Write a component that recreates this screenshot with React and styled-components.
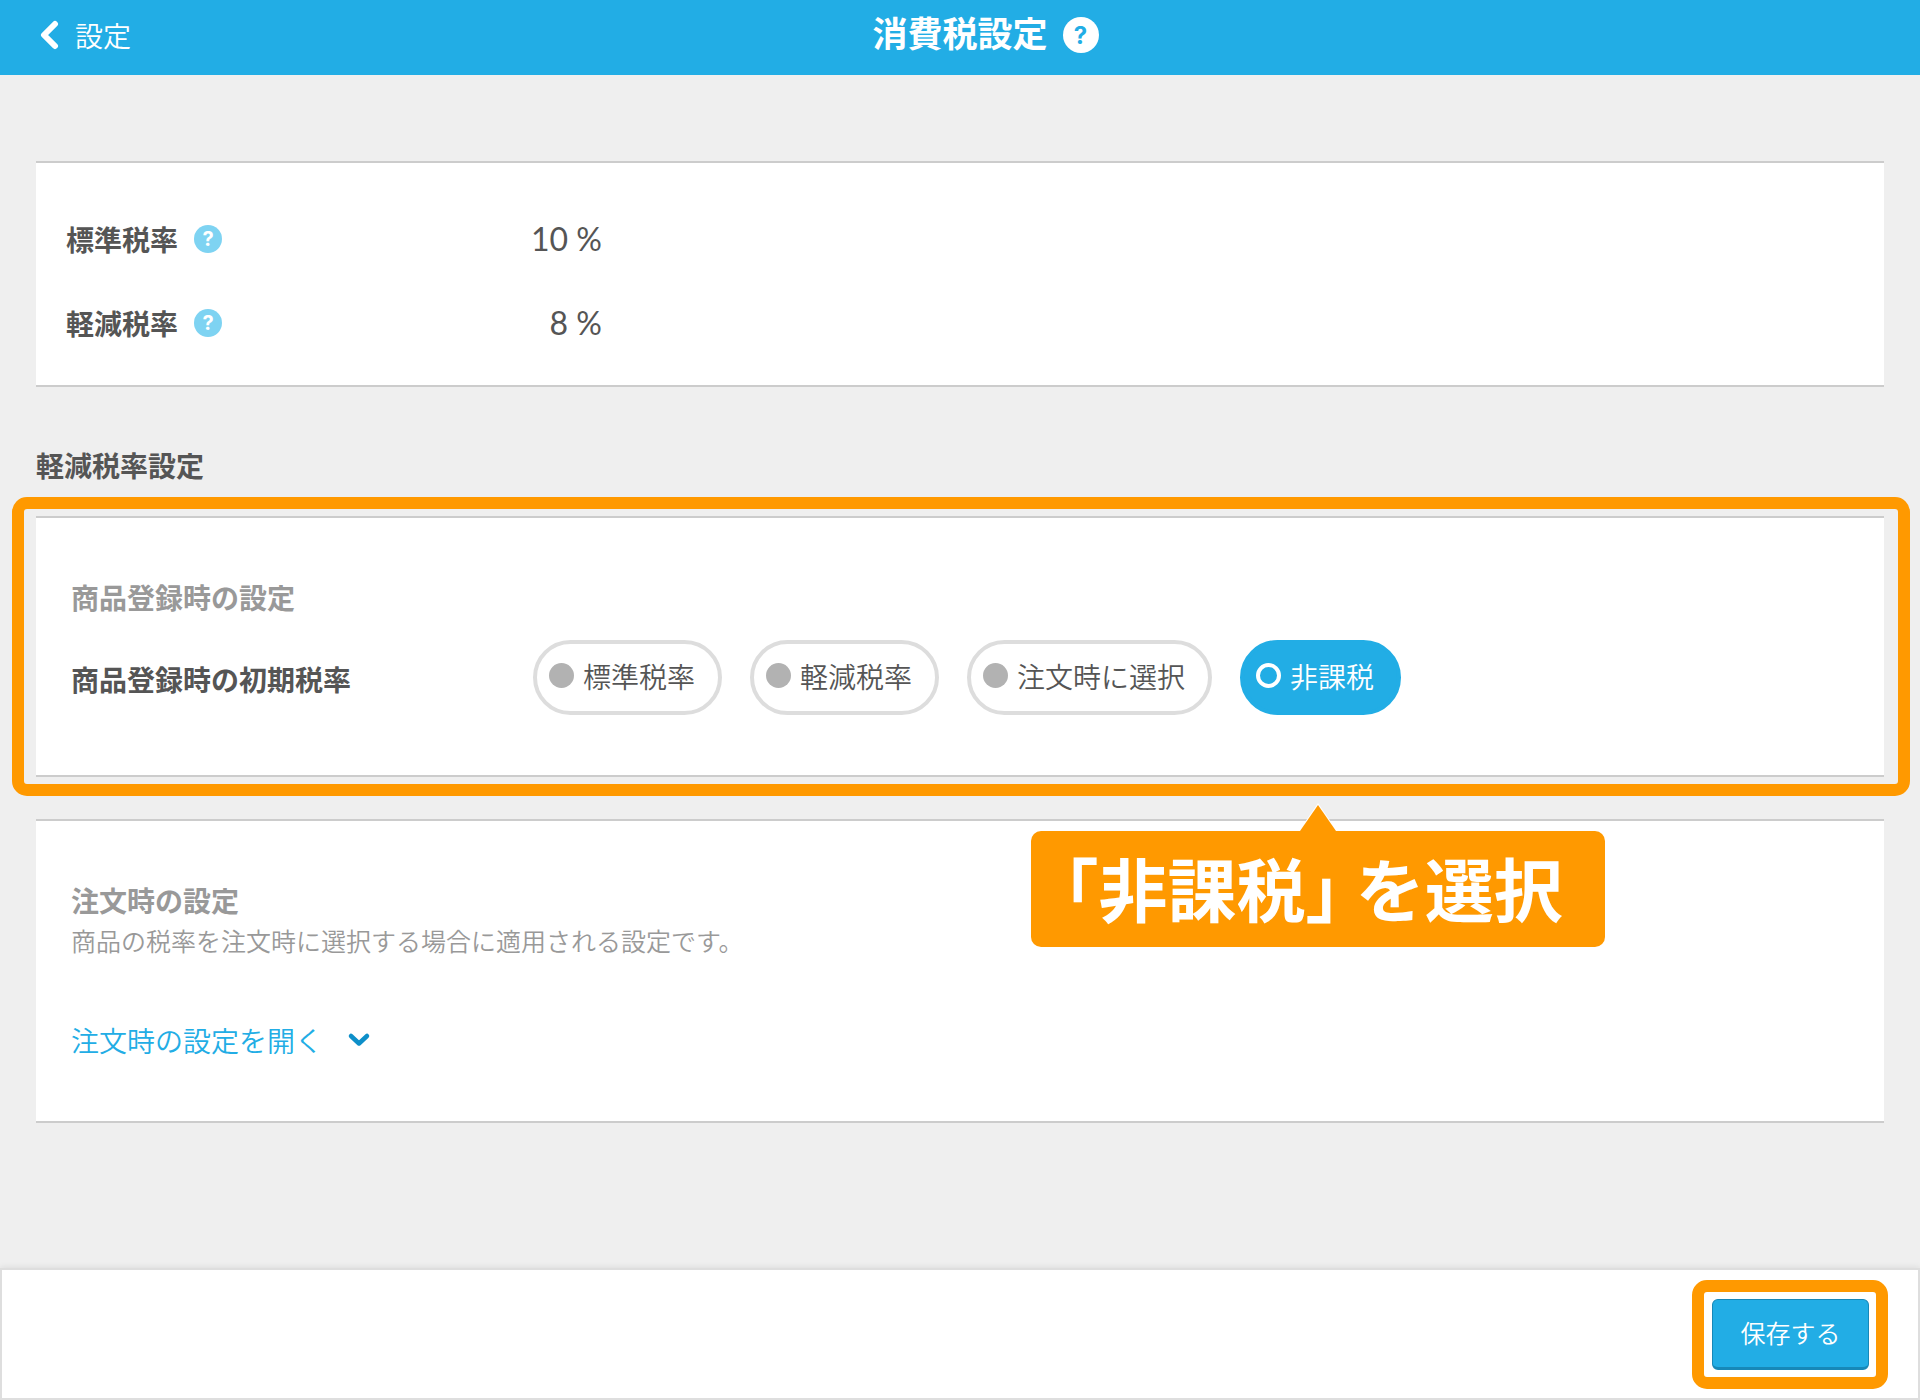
import React, { useState } from "react";
import styled, { createGlobalStyle } from "styled-components";

const color = {
  brand: "#22ade5",
  brandDark: "#1788b8",
  brandLight: "#7ed3f2",
  accent: "#ff9900",
  page: "#efefef",
  line: "#cccccc",
  frame: "#dedede",
  text: "#555555",
  muted: "#999999",
  dot: "#b2b2b2",
};

const GlobalStyle = createGlobalStyle`
  *, *::before, *::after { box-sizing: border-box; }
  body {
    margin: 0;
    background: ${color.page};
    color: ${color.text};
    font-family: "Noto Sans CJK JP", sans-serif;
    font-size: 28px;
    font-weight: 350;
    line-height: 42px;
  }
  button, input { font: inherit; }
`;

const Page = styled.div`
  min-height: 100vh;
  display: flex;
  flex-direction: column;
`;

const Header = styled.header`
  display: grid;
  grid-template-columns: 1fr auto 1fr;
  align-items: center;
  gap: 15px;
  height: 75px;
  padding: 0 40px 6px;
  background: ${color.brand};
  color: #fff;
`;

const BackLink = styled.a`
  display: flex;
  align-items: center;
  gap: 16px;
  color: inherit;
  text-decoration: none;
`;

const Title = styled.h1`
  margin: 0;
  padding-bottom: 5px;
  font-size: 35px;
  font-weight: 700;
  line-height: 54px;
`;

const HelpButton = styled.button`
  display: flex;
  align-items: center;
  justify-content: center;
  width: ${(p) => (p.$large ? 36 : 28)}px;
  height: ${(p) => (p.$large ? 36 : 28)}px;
  padding: ${(p) => (p.$large ? "2px 0 0" : 0)};
  border: 0;
  border-radius: 50%;
  background: ${(p) => (p.$large ? "#fff" : color.brandLight)};
  color: ${(p) => (p.$large ? color.brand : "#fff")};
  font-family: Inter, sans-serif;
  font-size: ${(p) => (p.$large ? 24 : 20)}px;
  font-weight: 700;
  line-height: 28px;
  cursor: pointer;
`;

const Main = styled.main`
  flex: 1;
  display: flex;
  flex-direction: column;
  padding: 86px 36px 60px;
`;

const Card = styled.section`
  position: relative;
  padding: ${(p) => (p.$compact ? "34px 30px 20px" : "58px 35px 60px")};
  border: solid ${color.line};
  border-width: 2px 0;
  background: #fff;
`;

const HighlightedCard = styled(Card)`
  margin-bottom: 42px;

  &::after {
    content: "";
    position: absolute;
    inset: -21px -26px -21px -24px;
    border: 12px solid ${color.accent};
    border-radius: 15px;
    pointer-events: none;
  }
`;

const RateList = styled.dl`
  margin: 0;
`;

const RateRow = styled.div`
  display: grid;
  grid-template-columns: 456px 80px;
  align-items: center;
  height: 84px;
`;

const RateName = styled.dt`
  display: flex;
  align-items: center;
  gap: 16px;
  font-weight: 700;
`;

const RateValue = styled.dd`
  margin: 0;
  font-family: Lato, sans-serif;
  font-size: 32px;
  font-weight: 400;
  text-align: right;
`;

const SectionTitle = styled.h2`
  margin: 57px 0 30px;
  font-size: 28px;
  font-weight: 700;
`;

const CardTitle = styled.h3`
  margin: 0;
  color: ${color.muted};
  font-size: 28px;
  font-weight: 700;
`;

const Note = styled.p`
  margin: 0 0 60px;
  color: ${color.muted};
  font-size: 25px;
  line-height: 38px;
`;

const Field = styled.div`
  display: grid;
  grid-template-columns: 433px auto;
  align-items: center;
  gap: 29px;
  margin-top: 22px;
`;

const FieldLabel = styled.div`
  padding-top: 2px;
  font-weight: 700;
`;

const Options = styled.div`
  display: flex;
  flex-wrap: wrap;
  gap: 28px;
`;

const Pill = styled.label`
  display: flex;
  align-items: center;
  gap: 9px;
  height: 75px;
  padding: 0 23px 4px 12px;
  border: 4px solid ${(p) => (p.$on ? color.brand : "#dddddd")};
  border-radius: 38px;
  background: ${(p) => (p.$on ? color.brand : "#fff")};
  color: ${(p) => (p.$on ? "#fff" : color.text)};
  cursor: pointer;
`;

const Radio = styled.input`
  appearance: none;
  width: 25px;
  height: 25px;
  margin: 0;
  border-radius: 50%;
  background: ${color.dot};

  &:checked {
    border: 4px solid #fff;
    background: transparent;
  }
`;

const Callout = styled.div`
  position: absolute;
  z-index: 1;
  top: calc(100% + 56px);
  left: 995px;
  padding: 4px 42px 8px 33px;
  border-radius: 10px;
  background: ${color.accent};
  color: #fff;
  font-size: 69px;
  font-weight: 700;
  font-feature-settings: "halt";
  line-height: 104px;
  white-space: nowrap;
`;

const CalloutArrow = styled.svg`
  position: absolute;
  bottom: 100%;
  left: calc(50% - 20px);
  display: block;
`;

const OpenButton = styled.button`
  display: flex;
  align-items: center;
  gap: 24px;
  padding: 0;
  border: 0;
  background: none;
  color: ${color.brand};
  cursor: pointer;
`;

const Footer = styled.footer`
  display: flex;
  justify-content: flex-end;
  padding: 10px 30px 9px;
  border: 2px solid ${color.frame};
  background: #fff;
  box-shadow: 0 -1px 6px rgba(0, 0, 0, 0.08);
`;

const SaveHighlight = styled.div`
  padding: 7px 7px 7px 8px;
  border: 12px solid ${color.accent};
  border-radius: 15px;
`;

const SaveButton = styled.button`
  display: block;
  width: 157px;
  height: 71px;
  padding: 0 0 3px;
  border: solid ${color.brandDark};
  border-width: 1px 1px 3px;
  border-radius: 6px;
  background: ${color.brand};
  color: #fff;
  font-size: 25px;
  cursor: pointer;
`;

const OPTIONS = ["標準税率", "軽減税率", "注文時に選択", "非課税"];

const RATES = [
  { name: "標準税率", value: "10 %" },
  { name: "軽減税率", value: "8 %" },
];

function BackChevron() {
  return (
    <svg width="19" height="30" viewBox="0 0 19 30" fill="none" aria-hidden="true">
      <path d="M15 4 L4 15 L15 26" stroke="#fff" strokeWidth="6" strokeLinecap="round" strokeLinejoin="round" />
    </svg>
  );
}

function DownChevron() {
  return (
    <svg width="24" height="16" viewBox="0 0 24 16" fill="none" aria-hidden="true">
      <path d="M4 4 L12 11.5 L20 4" stroke="#0d8fc9" strokeWidth="4.5" strokeLinecap="round" strokeLinejoin="round" />
    </svg>
  );
}

export default function App() {
  const [selected, setSelected] = useState("非課税");

  return (
    <>
      <GlobalStyle />
      <Page>
        <Header>
          <BackLink href="#settings">
            <BackChevron />
            設定
          </BackLink>
          <Title>消費税設定</Title>
          <HelpButton type="button" $large>?</HelpButton>
        </Header>

        <Main>
          <Card $compact>
            <RateList>
              {RATES.map((rate) => (
                <RateRow key={rate.name}>
                  <RateName>
                    {rate.name}
                    <HelpButton type="button">?</HelpButton>
                  </RateName>
                  <RateValue>{rate.value}</RateValue>
                </RateRow>
              ))}
            </RateList>
          </Card>

          <SectionTitle>軽減税率設定</SectionTitle>

          <HighlightedCard>
            <CardTitle>商品登録時の設定</CardTitle>
            <Field role="radiogroup" aria-labelledby="default-rate">
              <FieldLabel id="default-rate">商品登録時の初期税率</FieldLabel>
              <Options>
                {OPTIONS.map((option) => (
                  <Pill key={option} $on={selected === option}>
                    <Radio
                      type="radio"
                      name="default-rate"
                      value={option}
                      checked={selected === option}
                      onChange={() => setSelected(option)}
                    />
                    {option}
                  </Pill>
                ))}
              </Options>
            </Field>
            <Callout>
              <CalloutArrow width="40" height="28" viewBox="0 0 40 28" aria-hidden="true">
                <path d="M1 28 L20 0 L39 28 Z" fill="#fff" />
                <path d="M2 28 L20 2 L38 28 Z" fill={color.accent} />
              </CalloutArrow>
              「非課税」 を選択
            </Callout>
          </HighlightedCard>

          <Card>
            <CardTitle>注文時の設定</CardTitle>
            <Note>商品の税率を注文時に選択する場合に適用される設定です。</Note>
            <OpenButton type="button">
              注文時の設定を開く
              <DownChevron />
            </OpenButton>
          </Card>
        </Main>

        <Footer>
          <SaveHighlight>
            <SaveButton type="button">保存する</SaveButton>
          </SaveHighlight>
        </Footer>
      </Page>
    </>
  );
}
